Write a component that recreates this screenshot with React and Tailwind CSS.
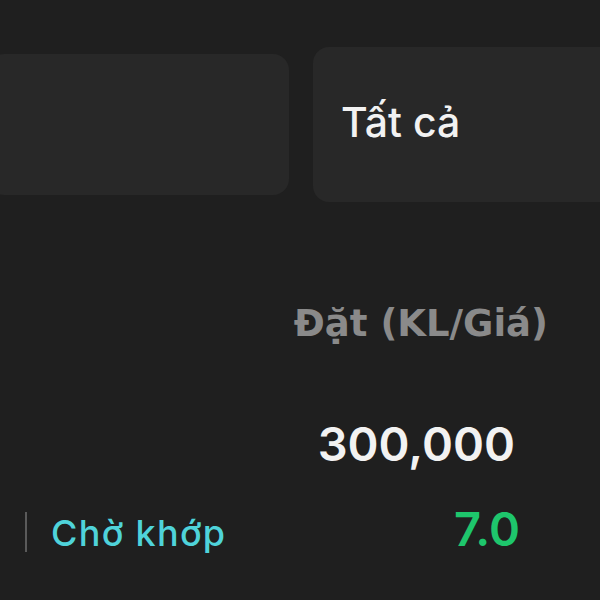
import React from "react";

function App() {
  return (
    <div className="w-[600px] h-[600px] overflow-hidden bg-[#1f1f1f] font-['Inter',sans-serif]">
      <div className="flex items-center gap-6 ml-[-12px] pt-[47px]">
        <div className="w-[301px] h-[141px] shrink-0 rounded-2xl bg-[#282828]" />
        <div className="w-[320px] h-[155px] shrink-0 rounded-2xl bg-[#282828] flex items-center pl-[28px] pb-[5px]">
          <span className="text-[41px] leading-none font-medium text-[#f2f2f2]">Tất cả</span>
        </div>
      </div>

      <div className="mt-[103px] flex justify-end pr-[52px]">
        <span className="font-['DejaVu_Sans',sans-serif] text-[37px] leading-none font-bold text-[#8a8a8a]">Đặt (KL/Giá)</span>
      </div>

      <div className="mt-[78px] flex justify-end pr-[85px]">
        <span className="text-[47px] leading-none font-semibold text-[#f2f2f2]">300,000</span>
      </div>

      <div className="mt-[38px] flex items-baseline justify-between pl-[25px] pr-[80px]">
        <div className="flex items-baseline gap-[24px]">
          <span className="inline-block w-[2px] h-[40px] bg-[#5a5a5a] translate-y-[6px]" />
          <span className="text-[36px] leading-none font-medium tracking-[1.3px] text-[#4fd3da]">Chờ khớp</span>
        </div>
        <span className="text-[47px] leading-none font-semibold text-[#1ec66c]">7.0</span>
      </div>
    </div>
  );
}

export default App;
